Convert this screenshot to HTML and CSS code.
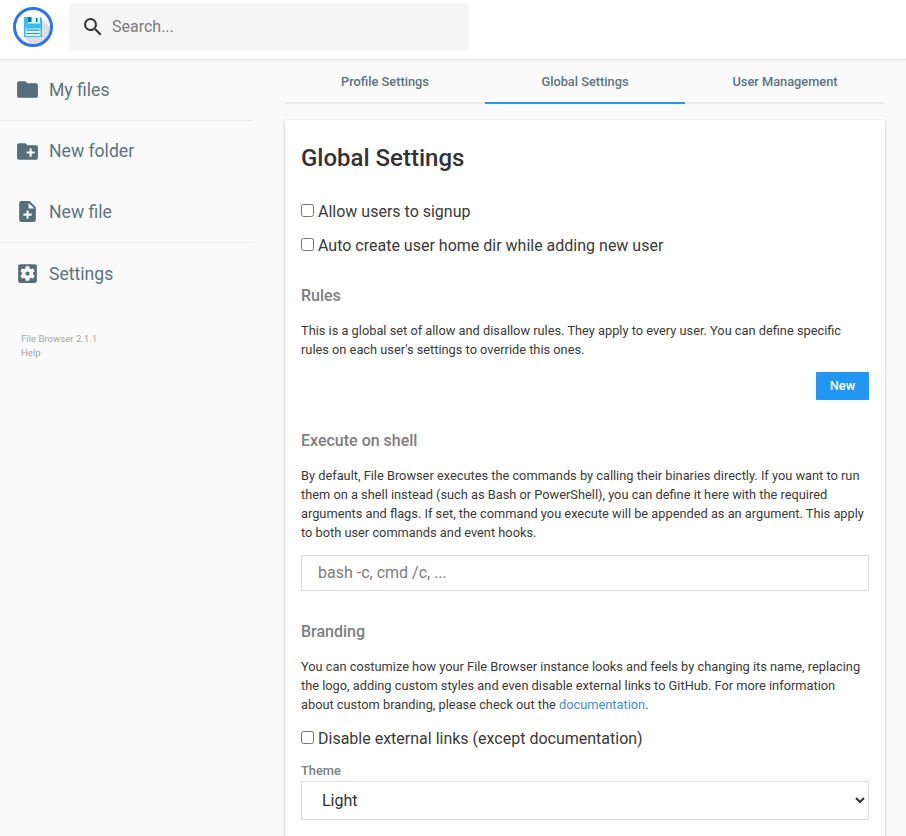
FILE: index.html
```html
<!DOCTYPE html>
<html lang="en">
<head>
<meta charset="utf-8">
<title>Global Settings - File Browser</title>
<link rel="stylesheet" href="styles.css">
</head>
<body>
<header class="header">
  <svg class="logo" viewBox="0 0 40 40">
    <circle cx="20" cy="20" r="18.6" fill="#fff"/>
    <path d="M28 11l9 9a17.5 17.5 0 0 1-20 17l-6-7z" fill="#dcdcdc"/>
    <circle cx="20" cy="20" r="18.500" fill="none" stroke="#2f74ee" stroke-width="3"/>
    <path d="M11 10h16.500l1.500 1.500V30H11z" fill="#32bdf3"/>
    <path d="M15 10h12v6.500H15z" fill="#d7f2fb"/>
    <path d="M15 10h3.500v5H15z" fill="#1768a5"/>
    <path d="M23 11h1.500v4H23z" fill="#176a91"/>
    <path d="M12.500 21.500h15V29h-15z" fill="#d4f3fd"/>
    <path d="M13.500 22.500h13v1.300h-13zM13.500 26h13v1h-13z" fill="#3690a9"/>
  </svg>
  <label class="search">
    <svg class="search-icon" viewBox="0 0 24 24"><path d="M15.500 14h-.79l-.28-.27A6.471 6.471 0 0 0 16 9.500 6.500 6.500 0 1 0 9.500 16c1.610 0 3.090-.59 4.230-1.570l.27.28v.79l5 4.990L20.490 19l-4.990-5zm-6 0C7.010 14 5 11.990 5 9.500S7.010 5 9.500 5 14 7.010 14 9.500 11.990 14 9.500 14z"/></svg>
    <input class="search-input" type="text" placeholder="Search...">
  </label>
</header>
<div class="body">
  <nav class="sidebar">
    <div class="group">
      <a class="action"><svg class="icon icon-folder" viewBox="0 0 24 24"><path d="M10 4H4c-1.100 0-1.990.9-1.990 2L2 18c0 1.100.9 2 2 2h16c1.100 0 2-.9 2-2V8c0-1.100-.9-2-2-2h-8l-2-2z"/></svg><span>My files</span></a>
    </div>
    <div class="group">
      <a class="action"><svg class="icon" viewBox="0 0 24 24"><path d="M20 6h-8l-2-2H4c-1.110 0-1.990.89-1.990 2L2 18c0 1.110.89 2 2 2h16c1.110 0 2-.89 2-2V8c0-1.110-.89-2-2-2zm-1 8h-3v3h-2v-3h-3v-2h3V9h2v3h3v2z"/></svg><span>New folder</span></a>
      <a class="action action-tall"><svg class="icon" viewBox="0 0 24 24"><path d="M14 2H6c-1.100 0-1.990.9-1.990 2L4 20c0 1.100.89 2 1.990 2H18c1.100 0 2-.9 2-2V8l-6-6zm2 14h-3v3h-2v-3H8v-2h3v-3h2v3h3v2zm-3-7V3.500L18.500 9H13z"/></svg><span>New file</span></a>
    </div>
    <div class="group group-last">
      <a class="action action-tall"><svg class="icon" viewBox="0 0 24 24"><path d="M12 10c-1.100 0-2 .9-2 2s.9 2 2 2 2-.9 2-2-.9-2-2-2zm7-7H5c-1.110 0-2 .9-2 2v14c0 1.100.89 2 2 2h14c1.110 0 2-.9 2-2V5c0-1.100-.89-2-2-2zm-1.750 9c0 .23-.02.46-.05.68l1.480 1.160c.13.11.17.3.08.45l-1.400 2.420c-.09.15-.27.21-.43.15l-1.740-.7c-.36.28-.76.51-1.180.69l-.26 1.850c-.03.17-.18.3-.35.3h-2.800c-.17 0-.32-.13-.35-.29l-.26-1.850c-.43-.18-.82-.41-1.180-.69l-1.740.7c-.16.06-.34 0-.43-.15l-1.400-2.420c-.09-.15-.05-.34.08-.45l1.480-1.160c-.03-.23-.05-.46-.05-.69s.02-.46.05-.68l-1.480-1.160c-.13-.11-.17-.3-.08-.45l1.400-2.420c.09-.15.27-.21.43-.15l1.740.7c.36-.28.76-.51 1.180-.69l.26-1.850c.03-.17.18-.3.35-.3h2.800c.17 0 .32.13.35.29l.26 1.850c.43.18.82.41 1.180.69l1.740-.7c.16-.06.34 0 .43.150l1.400 2.420c.09.15.05.34-.08.45l-1.480 1.160c.03.23.05.46.05.69z"/></svg><span>Settings</span></a>
    </div>
    <p class="credits"><span>File Browser 2.1.1</span><span>Help</span></p>
  </nav>
  <main class="main">
    <ul class="tabs">
      <li class="tab">Profile Settings</li>
      <li class="tab tab-active">Global Settings</li>
      <li class="tab">User Management</li>
    </ul>
    <form class="card">
      <h2 class="title">Global Settings</h2>
      <label class="check"><input type="checkbox">Allow users to signup</label>
      <label class="check">
        <input type="checkbox">Auto create user home dir while adding new user</label>
      <h3 class="subtitle">Rules</h3>
      <p class="small">This is a global set of allow and disallow rules. They apply to every user. You can define specific<br>rules on each user's settings to override this ones.</p>
      <div class="actions"><button class="button" type="button">New</button></div>
      <h3 class="subtitle subtitle-spaced">Execute on shell</h3>
      <p class="small">By default, File Browser executes the commands by calling their binaries directly. If you want to run<br>them on a shell instead (such as Bash or PowerShell), you can define it here with the required<br>arguments and flags. If set, the command you execute will be appended as an argument. This apply<br>to both user commands and event hooks.</p>
      <input class="field" type="text" placeholder="bash -c, cmd /c, ...">
      <h3 class="subtitle subtitle-spaced">Branding</h3>
      <p class="small">You can costumize how your File Browser instance looks and feels by changing its name, replacing<br>the logo, adding custom styles and even disable external links to GitHub. For more information<br>about custom branding, please check out the <a class="link">documentation</a>.</p>
      <label class="check check-links"><input type="checkbox">Disable external links (except documentation)</label>
      <label class="theme-label" for="theme">Theme</label>
      <select class="select" id="theme"><option>Light</option><option>Dark</option></select>
    </form>
  </main>
</div>
</body>
</html>
```
FILE: styles.css
```css
* { box-sizing: border-box; }

body {
  margin: 0;
  height: 836px;
  overflow: hidden;
  background: #fafafa;
  color: #3a3a3a;
  font: 16px/20px Roboto, sans-serif;
}

h2, h3, p, ul { margin: 0; padding: 0; }

.header {
  display: flex;
  align-items: flex-start;
  height: 60px;
  padding: 3px 13px;
  background: #fff;
  border-bottom: 1px solid #e9e9e9;
  box-shadow: 0 0 5px rgba(0, 0, 0, .1);
}

.logo { width: 40px; height: 40px; margin: 4px 16px 0 0; }

.search {
  display: flex;
  align-items: center;
  width: 400px;
  height: 48px;
  padding-left: 12px;
  background: #f5f5f5;
  border-radius: 4px;
}

.search-icon { width: 24px; height: 24px; fill: #333; }

.search-input {
  flex: 1;
  margin-left: 7px;
  padding: 0 0 2px;
  border: 0;
  background: transparent;
  font: 16px Roboto, sans-serif;
}

.search-input::placeholder, .field::placeholder { color: #7c7c7c; }

.body { display: flex; }

.sidebar { width: 252px; margin-right: 33px; color: #5b7480; }
.group { border-bottom: 1px solid #ececec; }
.group-last { border-bottom: 0; }

.action {
  display: flex;
  align-items: center;
  gap: 10px;
  height: 60px;
  padding-left: 15px;
  font-size: 17.6px;
}

.action-tall { height: 61px; }
.icon { width: 25px; height: 25px; margin-right: -1px; fill: #546e7a; }
.icon-folder { margin-top: -2px; }

.credits {
  display: flex;
  flex-direction: column;
  margin: 28px 0 0 21px;
  color: #a5a5a5;
  font-size: 9.6px;
  line-height: 14px;
}

.main { width: 600px; }

.tabs {
  display: flex;
  margin-bottom: 16px;
  list-style: none;
}

.tab {
  flex: 1;
  height: 44px;
  padding-top: 12px;
  border-bottom: 2px solid #ececec;
  color: #5b7480;
  font-size: 12.8px;
  font-weight: 500;
  text-align: center;
}

.tab-active { border-color: #2e95e3; }

.card {
  height: 740px;
  padding: 23px 16px 0;
  background: #fff;
  box-shadow: 0 1px 3px rgba(0, 0, 0, .12), 0 1px 2px rgba(0, 0, 0, .16);
}

.title { margin-bottom: 43px; color: #333; font-size: 24px; font-weight: 500; line-height: 30px; }

.check {
  display: flex;
  align-items: flex-start;
  height: 34px;
  margin-top: -14px;
  margin-bottom: 14px;
  line-height: 20px;
}

.check input { width: 13px; height: 13px; margin: 2px 4px 0 0; }

.subtitle {
  margin: 16px 0 15px;
  color: #7e7e7e;
  font-size: 16px;
  font-weight: 500;
}

.subtitle-spaced { margin-top: 31px; }

.small { font-size: 12.8px; line-height: 19px; }
.link { color: #3d8fdc; }

.actions { display: flex; justify-content: flex-end; margin-top: 13px; }

.button {
  width: 53px;
  height: 28px;
  padding: 0 0 2px;
  border: 0;
  border-radius: 1px;
  background: #2196f3;
  color: #fff;
  font: 500 12.8px Roboto, sans-serif;
}

.field {
  display: block;
  width: 100%;
  height: 36px;
  margin-top: 13px;
  padding: 0 16px 2px;
  border: 1px solid #ddd;
  font: 16px Roboto, sans-serif;
}

.check-links { height: 20px; margin: 15px 0 12px; }

.theme-label { display: block; color: #7e7e7e; font-size: 12.8px; font-weight: 500; }

.select {
  display: block;
  width: 100%;
  height: 39px;
  padding: 0 0 0 16px;
  border: 1px solid #ddd;
  border-radius: 0;
  background: #fff;
  color: #333;
  font: 16px Roboto, sans-serif;
}
```
